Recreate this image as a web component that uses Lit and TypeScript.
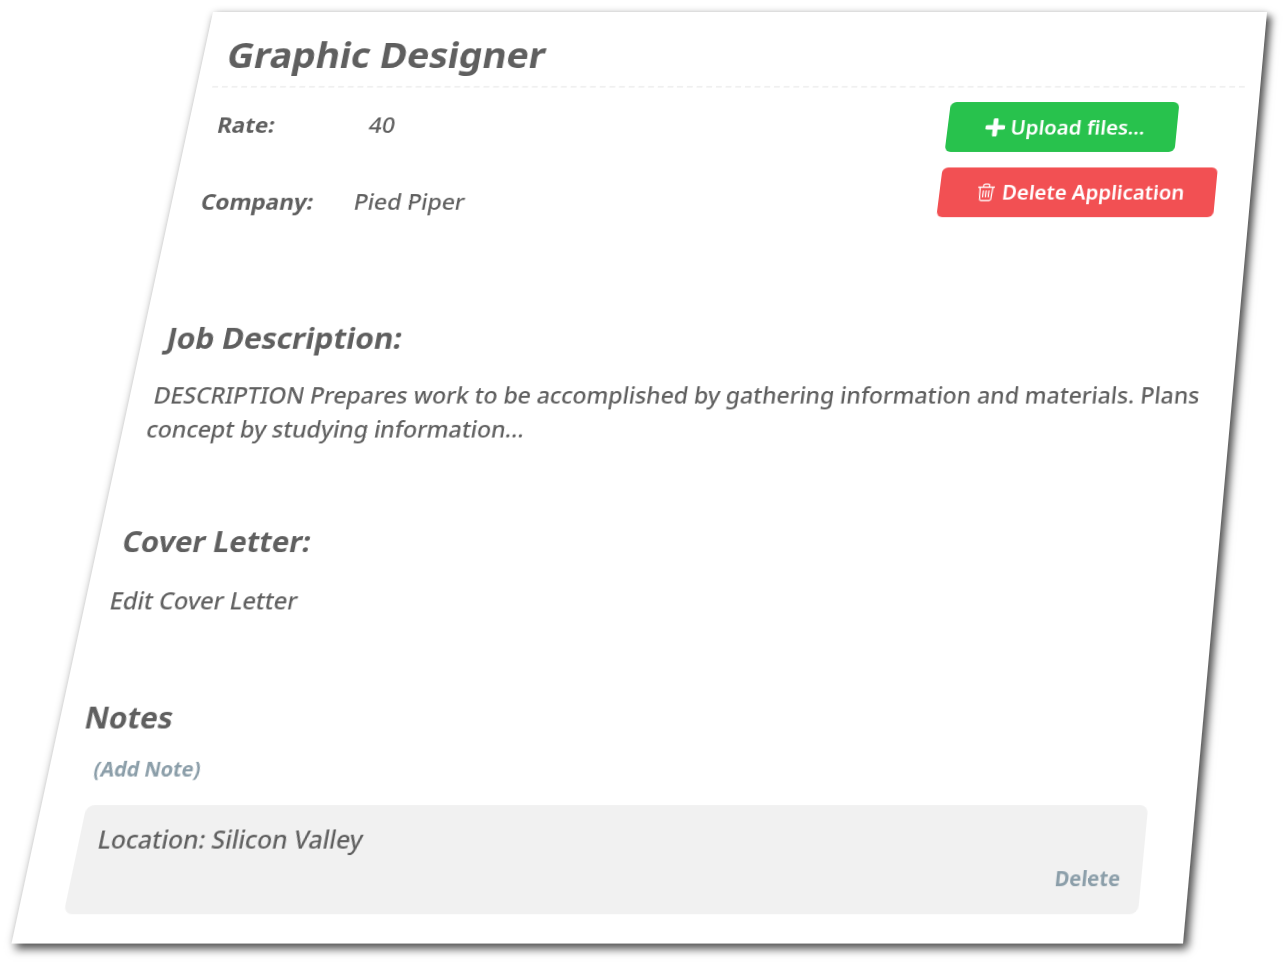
import { LitElement, html, css } from "lit";
import { customElement } from "lit/decorators.js";

@customElement("app-root")
export class AppRoot extends LitElement {
  static styles = css`
    :host {
      display: block;
      height: 963px;
      overflow: hidden;
      background: #fff;
      font-family: "Noto Sans", "Open Sans", sans-serif;
      color: #5f5f5f;
    }
    .card {
      box-sizing: border-box;
      width: 1100px;
      height: 950px;
      padding: 23px 16px 0;
      background: #fff;
      transform-origin: 0 0;
      transform: matrix3d(0.95818, 0, 0, 0, -0.21332, 0.88095, 0, -0.0001056, 0, 0, 1, 0, 213, 12, 0, 1);
      box-shadow: 0 0 8px rgba(0, 0, 0, 0.18), 5px 5px 8px rgba(0, 0, 0, 0.65);
    }
    .title {
      margin: 0;
      padding: 0 0 10px 9px;
      font-size: 38.6px;
      line-height: 50px;
      font-weight: 700;
      border-bottom: 2px dashed #f0f0f0;
    }
    .info {
      display: flex;
      justify-content: space-between;
      padding: 16px 20px 0 14px;
    }
    .rows {
      display: flex;
      flex-direction: column;
      gap: 54px;
      padding-top: 10px;
    }
    .row {
      display: flex;
      font-size: 23.4px;
      line-height: 30px;
      font-weight: 500;
    }
    .label {
      width: 156px;
      font-size: 23px;
      font-weight: 700;
    }
    .actions {
      display: flex;
      flex-direction: column;
      gap: 17px;
      width: 284px;
    }
    .btn {
      box-sizing: border-box;
      display: flex;
      align-items: center;
      height: 55px;
      border-radius: 6px;
      color: #fff;
      font-size: 21px;
      font-weight: 600;
    }
    .green {
      margin-left: 2px;
      padding-left: 6px;
      width: 236px;
      justify-content: center;
      background: #28c24d;
    }
    .red {
      height: 54px;
      margin-left: 2px;
      padding-left: 38px;
      font-size: 20.8px;
      background: #f25053;
    }
    .btn svg {
      flex: none;
      margin-right: 6px;
    }
    .red svg {
      margin-right: 7px;
    }
    .body {
      padding-left: 8px;
    }
    h2 {
      margin: 0;
      font-size: 28.5px;
      line-height: 40px;
      font-weight: 700;
    }
    .job {
      margin: 109px 0 0 1px;
      font-size: 30px;
    }
    .cover { margin-top: 76px; }
    .notes { margin-top: 76px; }
    p {
      margin: 22px 0 0;
      font-size: 22.93px;
      line-height: 35px;
      font-weight: 500;
    }
    .add {
      margin: 15px 0 0 19px;
      font-size: 19px;
      line-height: 30px;
      font-weight: 700;
      color: #8b9ea9;
    }
    .note {
      box-sizing: border-box;
      height: 102px;
      width: 1012px;
      margin: 19px 0 0 19px;
      padding: 15px 20px 0 18px;
      border-radius: 8px;
      background: #f1f1f1;
    }
    .note p {
      margin: 0;
      font-size: 23.35px;
    }
    .del {
      margin-top: 4px;
      text-align: right;
      font-size: 19px;
      line-height: 30px;
      font-weight: 700;
      color: #8b9ea9;
    }
  `;

  render() {
    return html`
      <div class="card">
        <h1 class="title">Graphic Designer</h1>
        <div class="info">
          <div class="rows">
            <div class="row"><span class="label">Rate:</span><span>40</span></div>
            <div class="row"><span class="label">Company:</span><span>Pied Piper</span></div>
          </div>
          <div class="actions">
            <div class="btn green">
              <svg width="20" height="20" viewBox="0 0 20 20"><path d="M10 2v16M2 10h16" stroke="#fff" stroke-width="5" stroke-linecap="round" fill="none"/></svg>
              Upload files...
            </div>
            <div class="btn red">
              <svg width="19" height="20" viewBox="0 0 19 20" fill="none" stroke="#fff" stroke-width="1.3"><path d="M1 4.5h17M6.5 4.5V2.6q0-1.4 1.4-1.4h3.2q1.4 0 1.4 1.4v1.9M3 4.5l.8 13q.1 1.5 1.6 1.5h8.2q1.5 0 1.6-1.5l.8-13M6.6 8v7.5M9.5 8v7.5M12.4 8v7.5"/></svg>
              Delete Application
            </div>
          </div>
        </div>
        <div class="body">
          <h2 class="job">Job Description:</h2>
          <p>DESCRIPTION Prepares work to be accomplished by gathering information and materials. Plans concept by studying information...</p>
          <h2 class="cover">Cover Letter:</h2>
          <p>Edit Cover Letter</p>
          <h2 class="notes">Notes</h2>
          <div class="add">(Add Note)</div>
          <div class="note">
            <p>Location: Silicon Valley</p>
            <div class="del">Delete</div>
          </div>
        </div>
      </div>
    `;
  }
}
